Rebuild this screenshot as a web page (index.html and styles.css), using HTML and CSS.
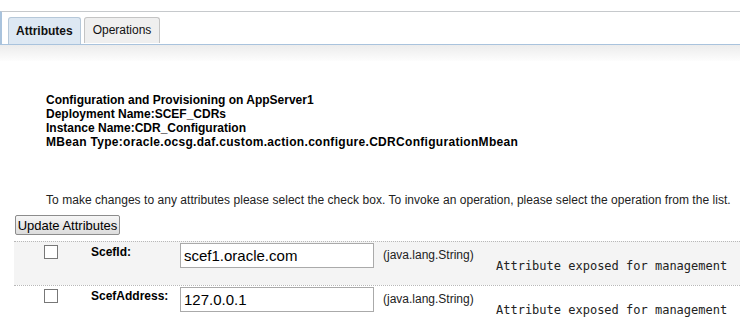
FILE: index.html
```html
<!DOCTYPE html>
<html>
<head>
<meta charset="utf-8">
<link rel="stylesheet" href="styles.css">
</head>
<body>
<div class="tabbar">
  <div class="tabs">
    <div class="tab active">Attributes</div>
    <div class="tab">Operations</div>
  </div>
</div>
<div class="shade"></div>
<div class="info">
  <div>Configuration and Provisioning on AppServer1</div>
  <div>Deployment Name:SCEF_CDRs</div>
  <div>Instance Name:CDR_Configuration</div>
  <div class="wide">MBean Type:oracle.ocsg.daf.custom.action.configure.CDRConfigurationMbean</div>
</div>
<p class="hint">To make changes to any attributes please select the check box. To invoke an operation, please select the operation from the list.</p>
<div class="btnrow"><button class="btn">Update Attributes</button></div>
<div class="rows">
  <div class="row alt">
    <div class="cb"><span class="box"></span></div>
    <div class="name">ScefId:</div>
    <div class="val"><input class="field" type="text" value="scef1.oracle.com"></div>
    <div class="type">(java.lang.String)</div>
    <div class="desc">Attribute exposed for management</div>
  </div>
  <div class="row">
    <div class="cb"><span class="box"></span></div>
    <div class="name">ScefAddress:</div>
    <div class="val"><input class="field" type="text" value="127.0.0.1"></div>
    <div class="type">(java.lang.String)</div>
    <div class="desc">Attribute exposed for management</div>
  </div>
</div>
</body>
</html>
```
FILE: styles.css
```css
html, body { margin: 0; padding: 0; background: #fff; }
body {
  font-family: "Liberation Sans", Arial, sans-serif;
  font-size: 12px;
  color: #000;
  width: 740px;
  height: 318px;
  overflow: hidden;
}
.tabbar {
  margin-top: 11px;
  border-top: 1px solid #c6c9cc;
  border-bottom: 1px solid #a9c3dd;
  border-left: 2px solid #a9c3dd;
  height: 32px;
  display: flex;
  align-items: flex-end;
}
.tabs { display: flex; gap: 3px; padding-left: 6px; }
.tab {
  height: 25px;
  line-height: 25px;
  padding: 0 8px;
  border: 1px solid #c4c4c4;
  border-bottom: none;
  border-radius: 3px 3px 0 0;
  background: #efefef;
  font-size: 12px;
  color: #111;
}
.tab.active {
  background: #dde8f3;
  border-color: #b6c8d9;
  font-weight: bold;
  height: 26px;
  line-height: 27px;
  padding: 0 7px;
}
.shade {
  height: 16px;
  background: linear-gradient(#ececec, #fdfdfd);
}
.info {
  margin: 32px 0 0 46px;
  font-weight: bold;
  line-height: 14px;
  font-size: 12px;
}
.info .wide { letter-spacing: 0.3px; }
.hint {
  margin: 44px 0 0 46px;
  font-size: 12px;
  color: #222;
  line-height: 14px;
  white-space: nowrap;
  letter-spacing: 0.04px;
}
.btnrow { padding: 8px 0 0 15px; }
.btn {
  font-family: "Liberation Sans", Arial, sans-serif;
  font-size: 13px;
  height: 20px;
  width: 105px;
  padding: 0;
  border: 1px solid #8c8c8c;
  border-radius: 2px;
  background: linear-gradient(#f6f6f6, #dcdcdc);
  color: #000;
}
.rows { margin: 6px 0 0 14px; }
.row {
  display: flex;
  border-top: 1px dotted #b8b8b8;
  height: 43px;
}
.row.alt { background: #f4f4f4; }
.cb { width: 47px; padding: 3px 0 0 30px; }
.box {
  display: block;
  width: 12px;
  height: 12px;
  border: 1px solid #777;
  background: #fff;
}
.name {
  width: 89px;
  padding-top: 3px;
  font-weight: bold;
  font-size: 12px;
}
.val { padding-top: 1px; }
.field {
  box-sizing: border-box;
  width: 194px;
  height: 25px;
  border: 1px solid #aaa;
  padding: 0 3px;
  font-family: "Liberation Sans", Arial, sans-serif;
  font-size: 15px;
  color: #000;
  background: #fff;
  margin: 0;
}
.type {
  width: 113px;
  padding: 6px 0 0 9px;
  font-size: 12px;
  color: #222;
}
.desc {
  padding-top: 17px;
  font-family: "DejaVu Sans Mono", monospace;
  font-size: 12px;
  color: #222;
}
```
